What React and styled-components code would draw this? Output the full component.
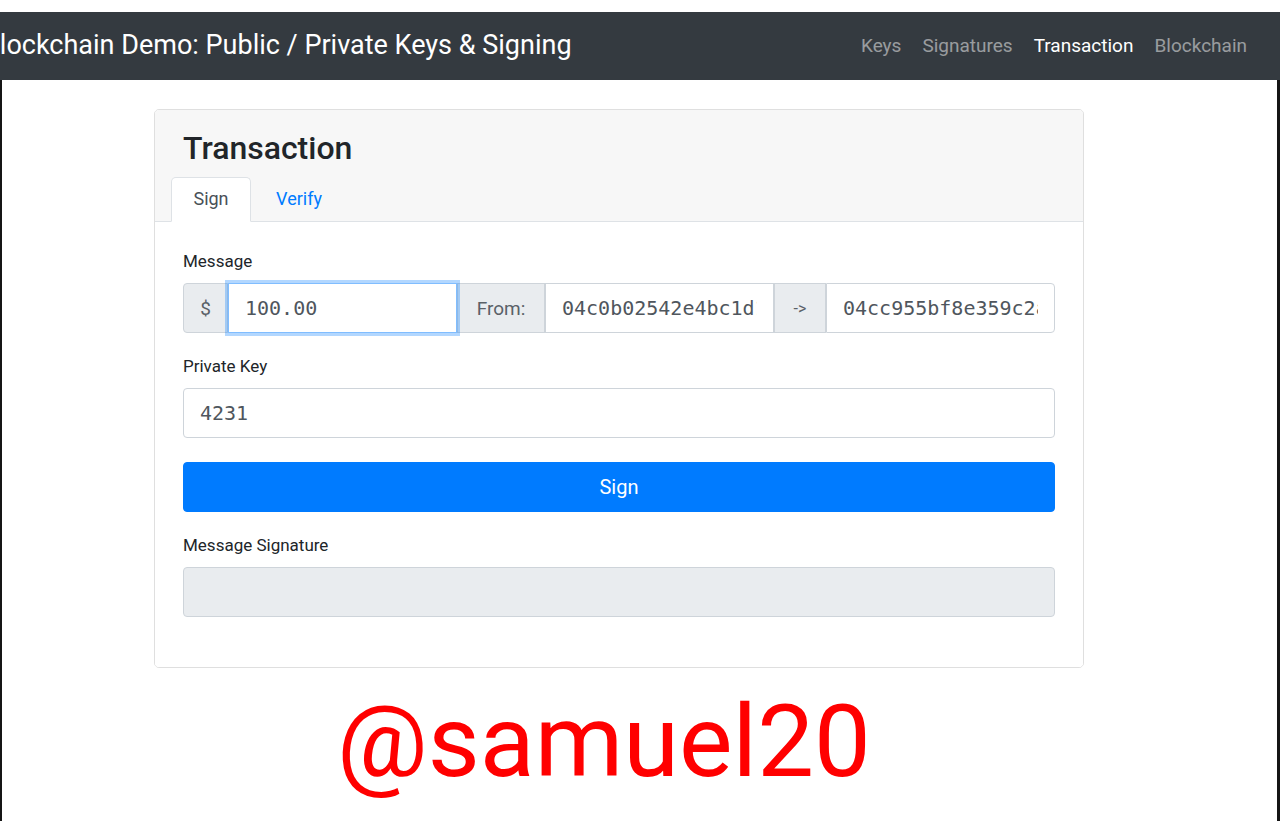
import React from 'react';
import styled, { createGlobalStyle } from 'styled-components';

const GlobalStyle = createGlobalStyle`
	html, body {
		margin: 0;
		padding: 0;
		background: #fff;
		font-family: Roboto, 'Liberation Sans', sans-serif;
		color: #212529;
	}
	* {
		box-sizing: border-box;
	}
`;

const Page = styled.div`
	padding-top: 12px;
	width: 1280px;
	height: 821px;
	overflow: hidden;
	display: flex;
	flex-direction: column;
`;

const Navbar = styled.nav`
	height: 68px;
	background: #343a40;
	display: flex;
	align-items: center;
	justify-content: space-between;
	padding-right: 33px;
	padding-bottom: 2px;
	flex-shrink: 0;
`;

// the brand is cut off at the left edge in the original capture
const Brand = styled.div`
	color: #fff;
	font-size: 27px;
	margin-left: -17px;
	white-space: nowrap;
`;

const NavLinks = styled.div`
	display: flex;
	gap: 21px;
`;

const NavLink = styled.a`
	font-size: 19px;
	color: ${p => (p.active ? '#fff' : 'rgba(255, 255, 255, 0.5)')};
	text-decoration: none;
`;

const Content = styled.div`
	flex: 1;
	border-left: 2px solid #151515;
	border-right: 3px solid #151515;
	padding: 29px 0 0 152px;
`;

const Card = styled.section`
	width: 930px;
	border: 1px solid rgba(0, 0, 0, 0.125);
	border-radius: 5px;
	overflow: hidden;
`;

const CardHeader = styled.header`
	background: #f7f7f7;
	border-bottom: 1px solid #dee2e6;
	padding: 18px 28px 0 16px;
`;

const Title = styled.h2`
	margin: 0 0 9px 12px;
	font-size: 32px;
	font-weight: 500;
	line-height: 40px;
`;

const Tabs = styled.div`
	display: flex;
	margin-bottom: -1px;
`;

const Tab = styled.div`
	width: ${p => p.width}px;
	height: 45px;
	display: flex;
	align-items: center;
	justify-content: center;
	padding-bottom: 2px;
	font-size: 18px;
	color: ${p => (p.active ? '#495057' : '#007bff')};
	background: ${p => (p.active ? '#fff' : 'transparent')};
	border: 1px solid ${p => (p.active ? '#dee2e6' : 'transparent')};
	border-bottom-color: ${p => (p.active ? '#fff' : 'transparent')};
	border-radius: 5px 5px 0 0;
`;

const CardBody = styled.div`
	padding: 28px 28px 50px 28px;
	background: #fff;
`;

const Group = styled.div`
	margin-bottom: ${p => p.gap ?? 22}px;
`;

const Label = styled.label`
	display: block;
	font-size: 17px;
	margin-bottom: 11px;
	line-height: 22px;
`;

const InputGroup = styled.div`
	display: flex;
	height: 50px;
`;

const Addon = styled.span`
	width: ${p => p.width}px;
	display: flex;
	align-items: center;
	justify-content: center;
	background: #e9ecef;
	border: 1px solid #ced4da;
	color: #5a6168;
	font-size: ${p => p.size || 19}px;
	border-radius: ${p => (p.first ? '4px 0 0 4px' : '0')};
	flex-shrink: 0;
`;

const Input = styled.input`
	flex: 1;
	min-width: 0;
	height: 100%;
	font-family: 'DejaVu Sans Mono', 'Liberation Mono', monospace;
	font-size: 20px;
	color: #4f565d;
	padding: 0 16px;
	border: 1px solid ${p => (p.focus ? '#80bdff' : '#ced4da')};
	box-shadow: ${p => (p.focus ? '0 0 0 3px rgba(0, 123, 255, 0.3)' : 'none')};
	border-radius: ${p => p.radius || '0'};
	outline: none;
	background: #fff;
	position: relative;
	z-index: ${p => (p.focus ? 1 : 0)};
`;

const FullInput = styled(Input)`
	width: 100%;
	height: 50px;
	border-radius: 4px;
`;

const Button = styled.button`
	display: block;
	width: 100%;
	height: 50px;
	border: 1px solid #007bff;
	background: #007bff;
	color: #fff;
	font-family: Roboto, 'Liberation Sans', sans-serif;
	font-size: 20px;
	border-radius: 4px;
	margin-bottom: 22px;
`;

const Signature = styled.textarea`
	display: block;
	width: 100%;
	height: 50px;
	background: #e9ecef;
	border: 1px solid #ced4da;
	border-radius: 4px;
	resize: none;
`;

const Watermark = styled.div`
	margin: 22px 0 0 183px;
	font-family: Roboto, 'Liberation Sans', sans-serif;
	font-size: 101px;
	line-height: 104px;
	color: #ff0000;
`;

export default function App() {
	return (
		<>
			<GlobalStyle />
			<Page>
				<Navbar>
					<Brand>Blockchain Demo: Public / Private Keys &amp; Signing</Brand>
					<NavLinks>
						<NavLink>Keys</NavLink>
						<NavLink>Signatures</NavLink>
						<NavLink active>Transaction</NavLink>
						<NavLink>Blockchain</NavLink>
					</NavLinks>
				</Navbar>
				<Content>
					<Card>
						<CardHeader>
							<Title>Transaction</Title>
							<Tabs>
								<Tab active width={80}>Sign</Tab>
								<Tab width={96}>Verify</Tab>
							</Tabs>
						</CardHeader>
						<CardBody>
							<Group gap={22}>
								<Label>Message</Label>
								<InputGroup>
									<Addon first width={45}>$</Addon>
									<Input focus defaultValue='100.00' />
									<Addon width={88}>From:</Addon>
									<Input defaultValue='04c0b02542e4bc1d1e0f3a7b9' />
									<Addon width={52} size={16}>-&gt;</Addon>
									<Input radius='0 4px 4px 0' defaultValue='04cc955bf8e359c2a1d4b7e8f' />
								</InputGroup>
							</Group>
							<Group gap={24}>
								<Label>Private Key</Label>
								<FullInput defaultValue='4231' />
							</Group>
							<Button>Sign</Button>
							<Group gap={0}>
								<Label>Message Signature</Label>
								<Signature disabled />
							</Group>
						</CardBody>
					</Card>
					<Watermark>@samuel20</Watermark>
				</Content>
			</Page>
		</>
	);
}
